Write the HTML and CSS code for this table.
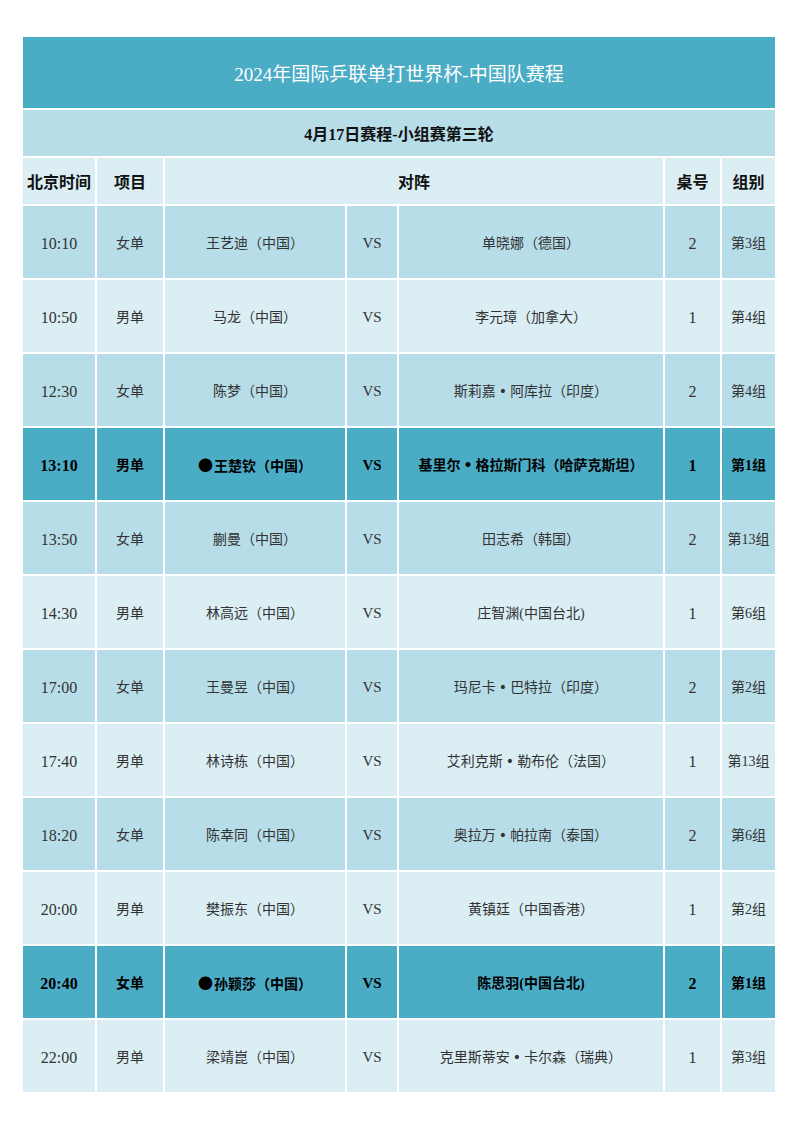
FILE: index.html
```html
<!DOCTYPE html>
<html lang="zh-CN">
<head>
<meta charset="utf-8">
<title>2024年国际乒联单打世界杯-中国队赛程</title>
<link rel="stylesheet" href="styles.css">
</head>
<body>
<table class="sched">
  <colgroup>
    <col class="c-time"><col class="c-type"><col class="c-p1"><col class="c-vs"><col class="c-p2"><col class="c-table"><col class="c-group">
  </colgroup>
  <tr class="r-title"><td colspan="7">2024年国际乒联单打世界杯-中国队赛程</td></tr>
  <tr class="r-sub"><td colspan="7">4月17日赛程-小组赛第三轮</td></tr>
  <tr class="r-head"><td>北京时间</td><td>项目</td><td colspan="3">对阵</td><td>桌号</td><td>组别</td></tr>
  <tr class="r-dark"><td class="num">10:10</td><td>女单</td><td>王艺迪（中国）</td><td class="vs">VS</td><td>单晓娜（德国）</td><td class="num">2</td><td>第3组</td></tr>
  <tr class="r-light"><td class="num">10:50</td><td>男单</td><td>马龙（中国）</td><td class="vs">VS</td><td>李元璋（加拿大）</td><td class="num">1</td><td>第4组</td></tr>
  <tr class="r-dark"><td class="num">12:30</td><td>女单</td><td>陈梦（中国）</td><td class="vs">VS</td><td>斯莉嘉<span class="mid">•</span>阿库拉（印度）</td><td class="num">2</td><td>第4组</td></tr>
  <tr class="r-hl"><td class="num">13:10</td><td>男单</td><td><span class="dot">●</span>王楚钦（中国）</td><td class="vs">VS</td><td>基里尔<span class="mid">•</span>格拉斯门科（哈萨克斯坦）</td><td class="num">1</td><td>第1组</td></tr>
  <tr class="r-dark"><td class="num">13:50</td><td>女单</td><td>蒯曼（中国）</td><td class="vs">VS</td><td>田志希（韩国）</td><td class="num">2</td><td>第13组</td></tr>
  <tr class="r-light"><td class="num">14:30</td><td>男单</td><td>林高远（中国）</td><td class="vs">VS</td><td>庄智渊(中国台北)</td><td class="num">1</td><td>第6组</td></tr>
  <tr class="r-dark"><td class="num">17:00</td><td>女单</td><td>王曼昱（中国）</td><td class="vs">VS</td><td>玛尼卡<span class="mid">•</span>巴特拉（印度）</td><td class="num">2</td><td>第2组</td></tr>
  <tr class="r-light"><td class="num">17:40</td><td>男单</td><td>林诗栋（中国）</td><td class="vs">VS</td><td>艾利克斯<span class="mid">•</span>勒布伦（法国）</td><td class="num">1</td><td>第13组</td></tr>
  <tr class="r-dark"><td class="num">18:20</td><td>女单</td><td>陈幸同（中国）</td><td class="vs">VS</td><td>奥拉万<span class="mid">•</span>帕拉南（泰国）</td><td class="num">2</td><td>第6组</td></tr>
  <tr class="r-light"><td class="num">20:00</td><td>男单</td><td>樊振东（中国）</td><td class="vs">VS</td><td>黄镇廷（中国香港）</td><td class="num">1</td><td>第2组</td></tr>
  <tr class="r-hl"><td class="num">20:40</td><td>女单</td><td><span class="dot">●</span>孙颖莎（中国）</td><td class="vs">VS</td><td>陈思羽(中国台北)</td><td class="num">2</td><td>第1组</td></tr>
  <tr class="r-light"><td class="num">22:00</td><td>男单</td><td>梁靖崑（中国）</td><td class="vs">VS</td><td>克里斯蒂安<span class="mid">•</span>卡尔森（瑞典）</td><td class="num">1</td><td>第3组</td></tr>
</table>
</body>
</html>
```

FILE: styles.css
```css
html, body {
  margin: 0;
  padding: 0;
  background: #ffffff;
}

body {
  padding: 35px 0 0 21px;
  font-family: "Liberation Serif", "Noto Sans CJK SC", serif;
  color: #333333;
}

.sched {
  table-layout: fixed;
  border-collapse: separate;
  border-spacing: 2px;
  width: 756px;
  background: #ffffff;
}

.sched td {
  padding: 0;
  text-align: center;
  vertical-align: middle;
  white-space: nowrap;
  overflow: hidden;
}

.c-time { width: 72px; }
.c-type { width: 66px; }
.c-p1 { width: 180px; }
.c-vs { width: 50px; }
.c-p2 { width: 264px; }
.c-table { width: 55px; }
.c-group { width: 53px; }

.r-title { height: 71px; }

.r-title td {
  background: #4bacc6;
  color: #ffffff;
  font-size: 19px;
  font-weight: 400;
}

.r-sub { height: 46px; }

.r-sub td {
  background: #b7dde8;
  color: #111111;
  font-size: 16px;
  font-weight: 700;
}

.r-head { height: 46px; }

.r-head td {
  background: #daeef3;
  color: #111111;
  font-size: 16px;
  font-weight: 700;
}

.r-dark,
.r-light,
.r-hl { height: 72px; }

.r-dark td,
.r-light td,
.r-hl td {
  font-size: 14px;
}

.r-dark td { background: #b7dde8; }
.r-light td { background: #daeef3; }

.r-hl td {
  background: #4bacc6;
  color: #000000;
  font-weight: 700;
}

.sched td.num {
  font-size: 16px;
  padding-top: 4px;
}

.sched td.vs {
  font-size: 15px;
  padding-top: 3px;
}

.dot {
  font-family: "Noto Sans CJK SC", sans-serif;
  font-size: 15px;
  margin-right: 1px;
}

.mid {
  font-family: "DejaVu Sans", sans-serif;
  padding: 0 3px;
}
```
